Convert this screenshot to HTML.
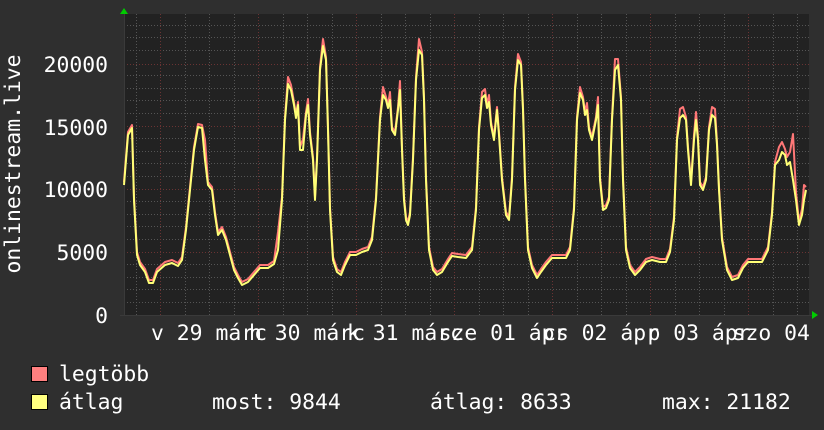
<!DOCTYPE html>
<html><head><meta charset="utf-8"><style>
html,body{margin:0;padding:0;background:#2f2f2f;}
svg{display:block;}
text{font-family:"DejaVu Sans Mono","Liberation Mono",monospace;fill:#fff;font-size:21.4px;}
</style></head><body>
<svg width="824" height="430" viewBox="0 0 824 430">
<defs>
<clipPath id="cl"><rect x="0" y="0" width="809" height="430"/></clipPath>
</defs>
<rect x="0" y="0" width="824" height="430" fill="#2f2f2f"/>
<rect x="124" y="14" width="685" height="301" fill="#222"/>
<g id="grid" stroke-width="1" shape-rendering="crispEdges">
<g stroke="#555" stroke-dasharray="1,2">
<path d="M124 302.5H809M124 289.5H809M124 277.5H809M124 264.5H809M124 239.5H809M124 226.5H809M124 214.5H809M124 201.5H809M124 176.5H809M124 163.5H809M124 151.5H809M124 138.5H809M124 113.5H809M124 100.5H809M124 88.5H809M124 75.5H809M124 50.5H809M124 37.5H809M124 25.5H809"/>
<path d="M136.5 14V315M185.5 14V315M209.5 14V315M234.5 14V315M283.5 14V315M307.5 14V315M332.5 14V315M381.5 14V315M405.5 14V315M430.5 14V315M479.5 14V315M503.5 14V315M528.5 14V315M577.5 14V315M601.5 14V315M626.5 14V315M675.5 14V315M699.5 14V315M724.5 14V315M773.5 14V315M797.5 14V315"/>
</g>
<g stroke="#6a3333" stroke-dasharray="1,2">
<path d="M124 252.5H809M124 189.5H809M124 126.5H809M124 64.5H809"/>
<path d="M160.5 14V315M258.5 14V315M356.5 14V315M454.5 14V315M552.5 14V315M650.5 14V315M748.5 14V315"/>
</g>
<path d="M124.5 14V316M120 315.5H812" stroke="#3a3a3a"/>
</g>
<g fill="none" stroke-width="2" stroke-linejoin="round">
<polyline transform="translate(0,-3)" stroke="#ff7777" points="124,185 128,135 132,128 134,200 137,255 140,265 145,272 149,283 153,283 157,272 165,265 172,263 178,266 182,260 186,230 190,190 194,150 198,127 202,128 205,143 208,185 212,190 215,215 218,235 222,230 226,240 230,255 234,270 238,278 242,285 248,282 254,275 260,268 268,268 274,264 278,235 282,200 285,120 288,80 291,88 294,105 296,118 298,105 300,150 303,142 306,115 308,102 310,135 313,160 315,200 317,160 320,70 323,42 326,60 328,130 330,210 333,260 337,272 341,275 345,265 350,255 356,255 362,252 368,250 372,240 376,200 380,120 383,90 386,100 388,108 390,95 392,130 395,135 398,110 400,84 402,150 404,200 406,220 408,225 410,215 413,160 416,80 419,42 422,55 424,100 426,180 429,250 433,270 437,275 442,272 448,262 452,256 458,257 466,258 472,250 476,210 479,130 482,95 485,92 487,108 489,98 491,125 494,140 497,110 499,135 502,180 506,215 509,220 512,180 515,90 518,57 521,65 523,110 525,180 528,250 532,268 537,278 541,272 546,265 552,258 560,258 566,258 570,250 574,210 577,120 580,90 583,100 585,115 587,106 589,130 592,140 596,120 598,100 600,180 603,210 606,208 609,200 612,120 615,62 618,62 621,100 623,180 626,250 630,268 635,275 640,270 646,262 652,260 660,262 666,262 670,252 674,220 677,140 680,112 683,110 686,120 688,150 691,185 694,138 696,115 698,140 700,185 703,190 706,180 709,130 712,110 715,112 717,145 719,190 722,240 727,270 732,280 738,278 743,268 748,262 756,262 762,262 768,250 772,215 775,165 779,150 782,145 785,152 787,160 790,155 793,137 796,195 799,225 802,212 804,188 806,190"/>
<polyline stroke="#ffff77" points="124,185 128,135 132,128 134,200 137,255 140,265 145,272 149,283 153,283 157,272 165,265 172,263 178,266 182,260 186,230 190,190 194,150 198,127 202,128 205,160 208,185 212,190 215,215 218,235 222,230 226,240 230,255 234,270 238,278 242,285 248,282 254,275 260,268 268,268 274,264 278,250 282,200 285,120 288,84 291,90 294,105 296,118 298,105 300,150 303,150 306,115 308,105 310,135 313,160 315,200 317,160 320,70 323,46 326,60 328,130 330,210 333,260 337,272 341,275 345,265 350,255 356,255 362,252 368,250 372,240 376,200 380,120 383,95 386,100 388,108 390,100 392,130 395,135 398,110 400,90 402,150 404,200 406,220 408,225 410,215 413,160 416,80 419,50 422,55 424,100 426,180 429,250 433,270 437,275 442,272 448,262 452,256 458,257 466,258 472,250 476,210 479,130 482,98 485,95 487,108 489,102 491,125 494,140 497,110 499,135 502,180 506,215 509,220 512,180 515,90 518,60 521,65 523,110 525,180 528,250 532,268 537,278 541,272 546,265 552,258 560,258 566,258 570,250 574,210 577,120 580,93 583,100 585,115 587,110 589,130 592,140 596,120 598,105 600,180 603,210 606,208 609,200 612,120 615,70 618,65 621,100 623,180 626,250 630,268 635,275 640,270 646,262 652,260 660,262 666,262 670,252 674,220 677,140 680,118 683,115 686,120 688,150 691,185 694,140 696,120 698,140 700,185 703,190 706,180 709,130 712,115 715,118 717,145 719,190 722,240 727,270 732,280 738,278 743,268 748,262 756,262 762,262 768,250 772,215 775,165 779,160 782,152 785,155 787,165 790,162 793,180 796,200 799,225 802,215 804,200 806,190"/>
</g>
<path d="M120 14L124 8L128 14Z" fill="#00cc00"/>
<path d="M812 311L818 315L812 319Z" fill="#00cc00"/>
<g text-anchor="end">
<text x="108" y="72">20000</text>
<text x="108" y="135">15000</text>
<text x="108" y="197">10000</text>
<text x="108" y="260">5000</text>
<text x="108" y="323">0</text>
</g>
<text transform="translate(20,164) rotate(-90)" text-anchor="middle">onlinestream.live</text>
<g text-anchor="middle" clip-path="url(#cl)">
<text x="209" y="340">v 29 márc</text>
<text x="307" y="340">h 30 márc</text>
<text x="405" y="340">k 31 márc</text>
<text x="503" y="340">sze 01 ápr</text>
<text x="601" y="340">cs 02 ápr</text>
<text x="699" y="340">p 03 ápr</text>
<text x="797" y="340">szo 04 ápr</text>
</g>
<rect x="31.5" y="366.5" width="16" height="15" fill="#ff7f7f" stroke="#000"/>
<rect x="31.5" y="394.5" width="16" height="15" fill="#ffff7f" stroke="#000"/>
<text x="59" y="381">legtöbb</text>
<text x="59" y="409">átlag</text>
<text x="212" y="409">most: 9844</text>
<text x="430" y="409">átlag: 8633</text>
<text x="662" y="409">max: 21182</text>
</svg>
</body></html>
